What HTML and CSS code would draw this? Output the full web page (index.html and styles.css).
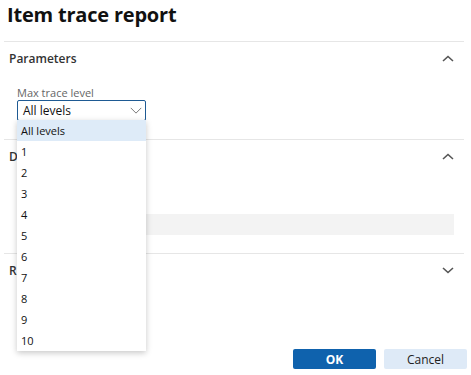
FILE: index.html
```html
<!DOCTYPE html>
<html lang="en">
<head>
    <meta charset="UTF-8">
    <title>Item trace report</title>
    <link rel="stylesheet" href="styles.css">
</head>
<body>

<div class="dialog">
    <h1 class="title">Item trace report</h1>

    <div class="section">
        <div class="section-head">
            <span>Parameters</span>
            <svg class="chev" viewBox="0 0 12 7"><path d="M1 6L6 1.5L11 6"/></svg>
        </div>
        <div class="section-body">
            <div class="field">
                <label class="field-label">Max trace level</label>
                <div class="select">
                    <span>All levels</span>
                    <svg class="select-chev" viewBox="0 0 13 8"><path d="M0.5 1L6.5 7L12.5 1"/></svg>
                </div>
                <ul class="menu">
                    <li class="active">All levels</li>
                    <li>1</li>
                    <li>2</li>
                    <li>3</li>
                    <li>4</li>
                    <li>5</li>
                    <li>6</li>
                    <li>7</li>
                    <li>8</li>
                    <li>9</li>
                    <li>10</li>
                </ul>
            </div>
        </div>
    </div>

    <div class="section">
        <div class="section-head">
            <span>D</span>
            <svg class="chev" viewBox="0 0 12 7"><path d="M1 6L6 1.5L11 6"/></svg>
        </div>
        <div class="section-body">
            <div class="field">
                <div class="input"></div>
            </div>
        </div>
    </div>

    <div class="section">
        <div class="section-head">
            <span>R</span>
            <svg class="chev" viewBox="0 0 12 7"><path d="M1 1L6 5.5L11 1"/></svg>
        </div>
    </div>

    <div class="footer">
        <button class="btn primary">OK</button>
        <button class="btn">Cancel</button>
    </div>
</div>

</body>
</html>
```

FILE: styles.css
```css
body {
    margin: 0;
    background: #fff;
    color: #222;
    font-family: 'Open Sans', 'Noto Sans', sans-serif;
}

.dialog {
    width: 471px;
    height: 375px;
    box-sizing: border-box;
    padding: 0 7px 0 4px;
    display: flex;
    flex-direction: column;
}

.title {
    margin: 0;
    padding: 0 3px;
    height: 41px;
    font-size: 20px;
    line-height: 29px;
    font-weight: 700;
    color: #111;
    letter-spacing: -0.2px;
}

.section {
    border-top: 1px solid #e6e6e6;
}

.section-head {
    height: 32px;
    padding: 0 10px 0 5px;
    display: flex;
    align-items: center;
    justify-content: space-between;
    font-size: 12px;
    font-weight: 600;
    color: #333;
}

.chev {
    width: 12px;
    height: 7px;
    fill: none;
    stroke: #555;
    stroke-width: 1.6;
}

.section-body {
    padding: 12px 10px 18px 13px;
}

.field {
    position: relative;
}

.field-label {
    display: block;
    font-size: 11px;
    color: #666;
    line-height: 14px;
}

.select {
    width: 129px;
    height: 21px;
    box-sizing: border-box;
    border: 1px solid #1e5a93;
    border-radius: 2px;
    display: flex;
    align-items: center;
    justify-content: space-between;
    padding: 0 3px 0 5px;
    font-size: 12px;
    color: #111;
}

.select-chev {
    width: 12px;
    height: 7px;
    fill: none;
    stroke: #666;
    stroke-width: 1;
}

.menu {
    position: absolute;
    left: 0;
    top: 34px;
    width: 129px;
    margin: 0;
    padding: 0;
    list-style: none;
    background: #fff;
    box-shadow: 0 2px 6px rgba(0, 0, 0, 0.22);
    z-index: 2;
}

.menu li {
    height: 21px;
    line-height: 21px;
    padding-left: 4px;
    font-size: 11px;
    color: #111;
}

.menu li.active {
    background: #deebf8;
}

.input {
    margin-top: 30px;
    height: 21px;
    background: #f3f3f3;
}

.footer {
    margin-top: auto;
    padding-bottom: 6px;
    display: flex;
    justify-content: flex-end;
    gap: 8px;
    margin-right: -3px;
}

.btn {
    width: 83px;
    height: 20px;
    border: none;
    border-radius: 2px;
    background: #deeaf7;
    color: #222;
    font-family: inherit;
    font-size: 12px;
    padding: 0;
}

.btn.primary {
    background: #0f62ad;
    color: #fff;
    font-weight: 700;
}
```
